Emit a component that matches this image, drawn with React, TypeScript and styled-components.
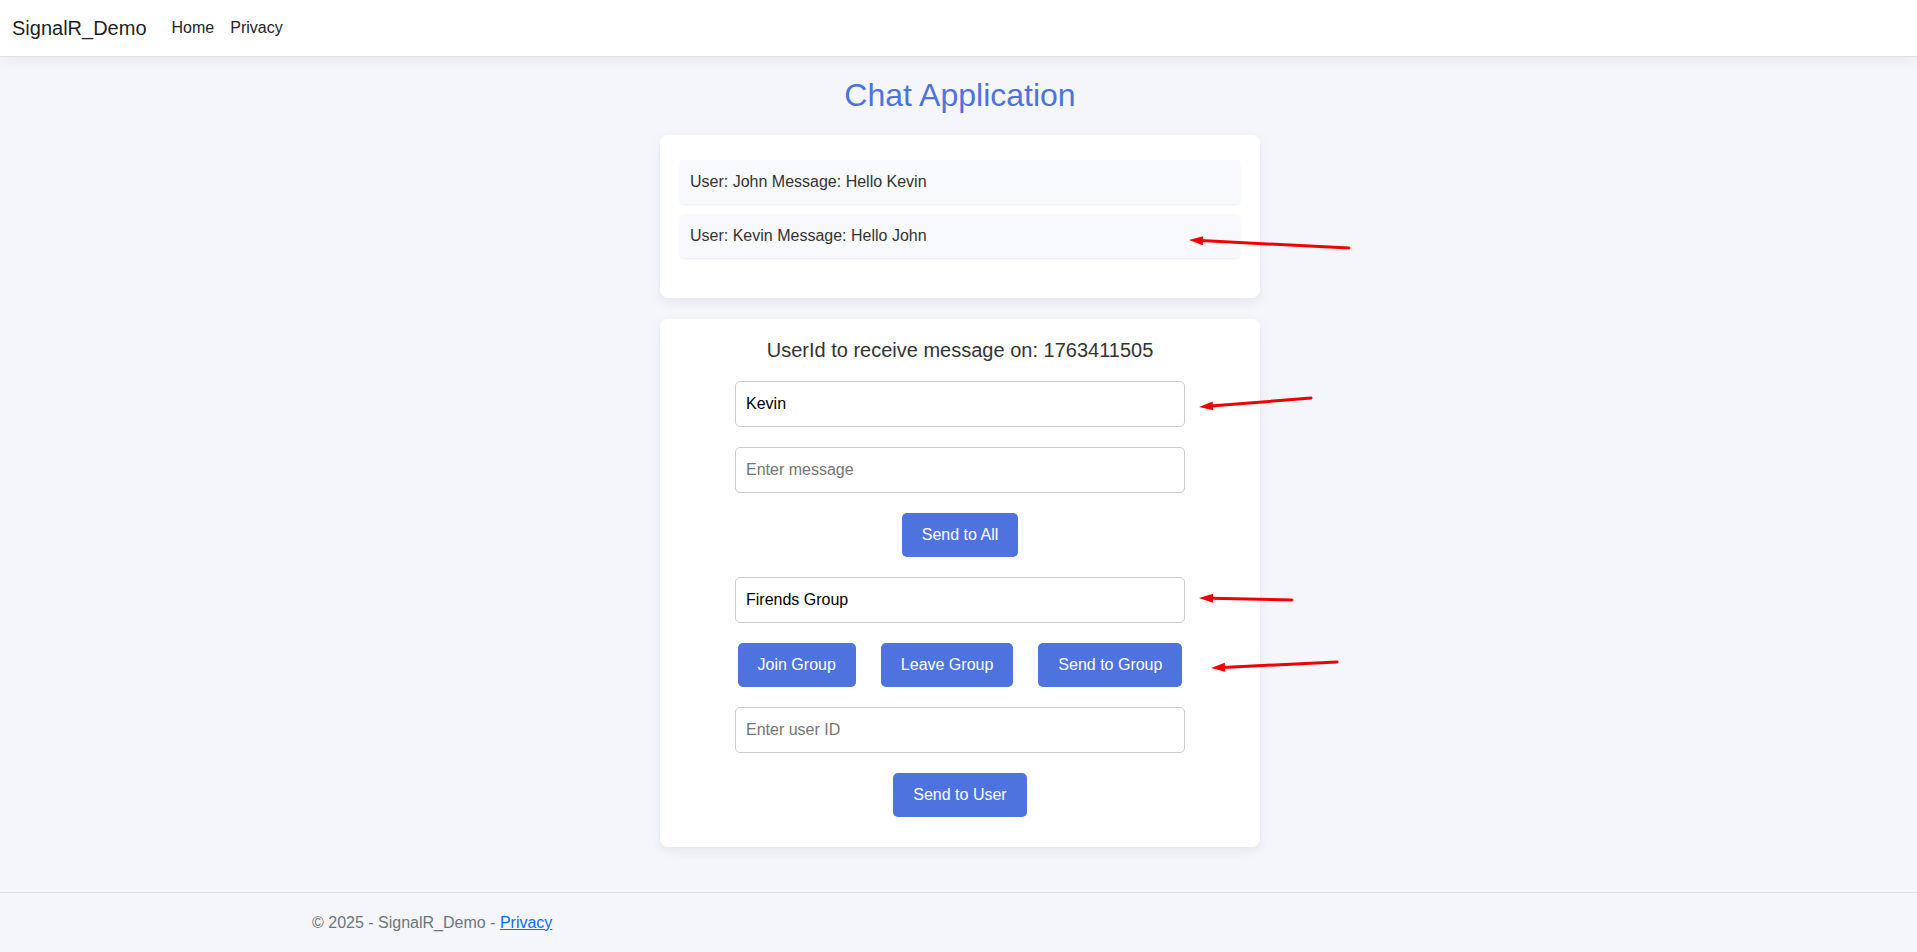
import styled, { createGlobalStyle } from "styled-components";

const GlobalStyle = createGlobalStyle`
  html, body {
    margin: 0;
    padding: 0;
  }
  body {
    font-family: "Liberation Sans", Arial, sans-serif;
    font-size: 16px;
    line-height: 1.5;
    color: #212529;
    background-color: #f4f6fb;
  }
  * {
    box-sizing: border-box;
  }
`;

const messages = [
  { user: "John", text: "Hello Kevin" },
  { user: "Kevin", text: "Hello John" },
];

// annotation arrows drawn on top of the page: [tailX, tailY, tipX, tipY]
const arrows: [number, number, number, number][] = [
  [1349, 248, 1189, 240],
  [1311, 398, 1199, 407],
  [1292, 600, 1199, 598],
  [1337, 662, 1211, 668],
];

function Arrow({ x1, y1, x2, y2 }: { x1: number; y1: number; x2: number; y2: number }) {
  const len = Math.hypot(x2 - x1, y2 - y1);
  const ux = (x2 - x1) / len;
  const uy = (y2 - y1) / len;
  const headLen = 14;
  const half = 4.5;
  const bx = x2 - ux * headLen;
  const by = y2 - uy * headLen;
  const points = `${x2},${y2} ${bx - uy * half},${by + ux * half} ${bx + uy * half},${by - ux * half}`;
  return (
    <g>
      <line x1={x1} y1={y1} x2={bx + ux * 2} y2={by + uy * 2} stroke="#f00000" strokeWidth={3} strokeLinecap="round" />
      <polygon points={points} fill="#f00000" />
    </g>
  );
}

export default function App() {
  return (
    <Page>
      <GlobalStyle />
      <NavBar>
        <Brand href="#">SignalR_Demo</Brand>
        <NavLink href="#">Home</NavLink>
        <NavLink href="#">Privacy</NavLink>
      </NavBar>
      <Main>
        <Title>Chat Application</Title>
        <MessageCard>
          {messages.map((m) => (
            <MessageItem key={m.user}>
              User: {m.user} Message: {m.text}
            </MessageItem>
          ))}
        </MessageCard>
        <ControlCard>
          <UserIdHeading>UserId to receive message on: 1763411505</UserIdHeading>
          <Input type="text" defaultValue="Kevin" />
          <Input type="text" placeholder="Enter message" />
          <Button>Send to All</Button>
          <Input type="text" defaultValue="Firends Group" />
          <ButtonRow>
            <Button>Join Group</Button>
            <Button>Leave Group</Button>
            <Button>Send to Group</Button>
          </ButtonRow>
          <Input type="text" placeholder="Enter user ID" />
          <Button>Send to User</Button>
        </ControlCard>
      </Main>
      <Footer>
        <FooterInner>
          © 2025 - SignalR_Demo - <FooterLink href="#">Privacy</FooterLink>
        </FooterInner>
      </Footer>
      <Annotations width="100%" height="100%">
        {arrows.map(([x1, y1, x2, y2], i) => (
          <Arrow key={i} x1={x1} y1={y1} x2={x2} y2={y2} />
        ))}
      </Annotations>
    </Page>
  );
}

const Page = styled.div`
  position: relative;
  min-height: 100vh;
  display: flex;
  flex-direction: column;
`;

const NavBar = styled.nav`
  display: flex;
  align-items: center;
  height: 57px;
  padding: 0 12px;
  background-color: #fff;
  border-bottom: 1px solid #dee2e6;
  box-shadow: 0 0.25rem 0.75rem rgba(0, 0, 0, 0.05);
  margin-bottom: 16px;
`;

const Brand = styled.a`
  font-size: 20px;
  line-height: 30px;
  color: rgba(0, 0, 0, 0.9);
  text-decoration: none;
  margin-right: 17px;
  margin-top: -1px;
`;

const NavLink = styled.a`
  font-size: 16px;
  line-height: 24px;
  padding: 0 8px;
  color: #212529;
  text-decoration: none;
`;

const Main = styled.main`
  flex: 1;
  display: flex;
  flex-direction: column;
  align-items: center;
  padding-left: 3px;
`;

const Title = styled.h2`
  margin: 3px 0 21px;
  font-size: 32px;
  line-height: 1.2;
  font-weight: 400;
  color: #4e73df;
`;

const Card = styled.section`
  width: 600px;
  background-color: #fff;
  border-radius: 8px;
  box-shadow: 0 4px 12px rgba(0, 0, 0, 0.07);
`;

const MessageCard = styled(Card)`
  display: flex;
  flex-direction: column;
  gap: 10px;
  padding: 25px 20px 40px;
`;

const MessageItem = styled.div`
  padding: 10px;
  font-size: 16px;
  line-height: 24px;
  color: #333;
  background-color: #f8f9fc;
  border-radius: 4px;
  box-shadow: 0 1px 2px rgba(0, 0, 0, 0.08);
`;

const ControlCard = styled(Card)`
  margin-top: 21px;
  display: flex;
  flex-direction: column;
  align-items: center;
  gap: 20px;
  padding: 19px 20px 30px;
`;

const UserIdHeading = styled.h4`
  margin: 0 0 -1px;
  font-size: 20px;
  line-height: 24px;
  font-weight: 400;
  color: #333;
`;

const Input = styled.input`
  width: 450px;
  height: 46px;
  padding: 10px;
  font-family: "Liberation Sans", Arial, sans-serif;
  font-size: 16px;
  line-height: 24px;
  color: #000;
  background-color: #fff;
  border: 1px solid #ccc;
  border-radius: 5px;
  outline: none;

  &::placeholder {
    color: #757575;
  }
`;

const Button = styled.button`
  height: 44px;
  padding: 10px 20px;
  font-family: "Liberation Sans", Arial, sans-serif;
  font-size: 16px;
  line-height: 24px;
  color: #fff;
  background-color: #4e73df;
  border: 0;
  border-radius: 5px;
  cursor: pointer;
`;

const ButtonRow = styled.div`
  display: flex;
  justify-content: center;
  gap: 25px;
`;

const Footer = styled.footer`
  height: 60px;
  padding-left: 3px;
  border-top: 1px solid #dee2e6;
  color: #6c757d;
  font-size: 16px;
  line-height: 59px;
  white-space: nowrap;
`;

const FooterInner = styled.div`
  max-width: 1320px;
  margin: 0 auto;
  padding: 0 12px;
`;

const FooterLink = styled.a`
  color: #0d6efd;
  text-decoration: underline;
`;

const Annotations = styled.svg`
  position: absolute;
  top: 0;
  left: 0;
  pointer-events: none;
`;
